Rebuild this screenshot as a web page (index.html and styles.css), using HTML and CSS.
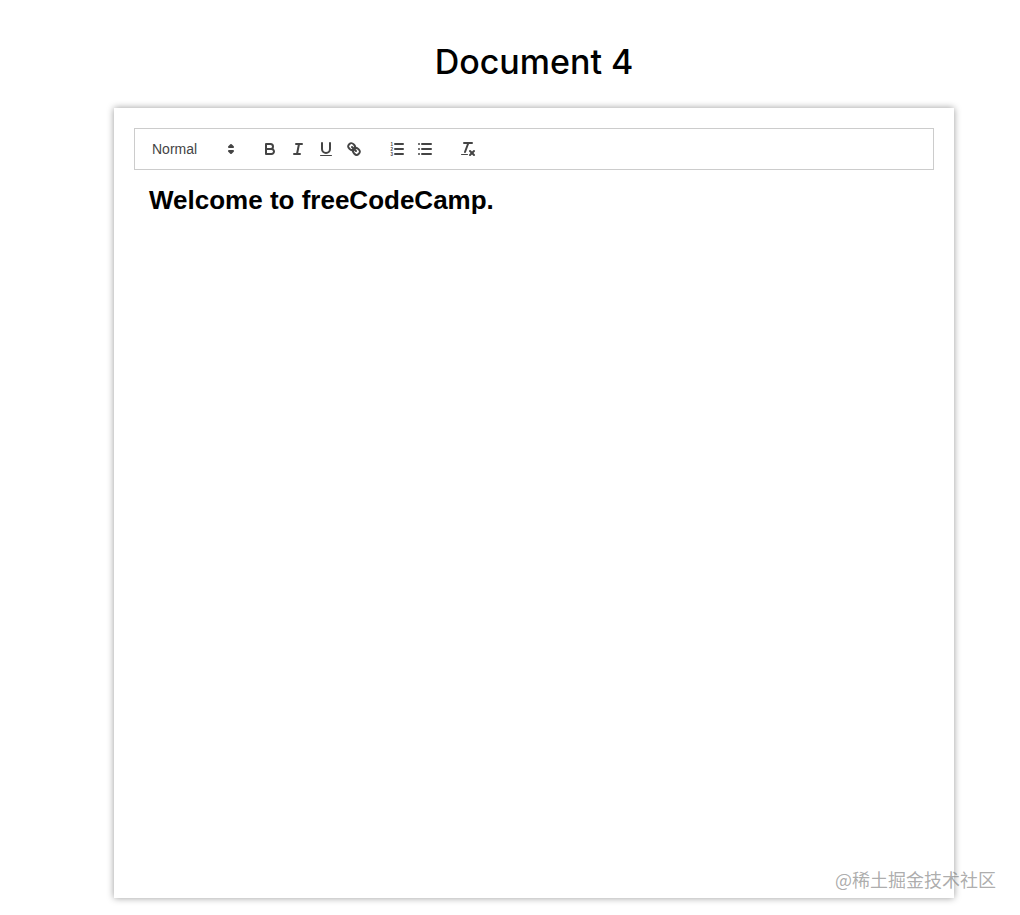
FILE: index.html
```html
<!DOCTYPE html>
<html lang="en">
<head>
  <meta charset="UTF-8">
  <title>Document 4</title>
  <link rel="stylesheet" href="styles.css">
</head>
<body>
  <div class="page">
    <h1 class="doc-title">Document 4</h1>

    <div class="paper">
      <div class="toolbar">
        <span class="formats">
          <span class="picker">
            <span class="picker-label">Normal</span>
            <svg viewBox="0 0 18 18">
              <polygon class="stroke" points="7 11 9 13 11 11 7 11"/>
              <polygon class="stroke" points="7 7 9 5 11 7 7 7"/>
            </svg>
          </span>
        </span>

        <span class="formats">
          <button class="tool" type="button" aria-label="Bold">
            <svg viewBox="0 0 18 18">
              <path class="stroke" d="M5,4H9.5A2.5,2.5,0,0,1,12,6.5v0A2.5,2.5,0,0,1,9.5,9H5A0,0,0,0,1,5,9V4A0,0,0,0,1,5,4Z"/>
              <path class="stroke" d="M5,9h5.5A2.5,2.5,0,0,1,13,11.5v0A2.5,2.5,0,0,1,10.5,14H5a0,0,0,0,1,0,0V9A0,0,0,0,1,5,9Z"/>
            </svg>
          </button>
          <button class="tool" type="button" aria-label="Italic">
            <svg viewBox="0 0 18 18">
              <line class="stroke" x1="7" x2="13" y1="4" y2="4"/>
              <line class="stroke" x1="5" x2="11" y1="14" y2="14"/>
              <line class="stroke" x1="8" x2="10" y1="14" y2="4"/>
            </svg>
          </button>
          <button class="tool" type="button" aria-label="Underline">
            <svg viewBox="0 0 18 18">
              <path class="stroke" d="M5,3V9a4.012,4.012,0,0,0,4,4H9a4.012,4.012,0,0,0,4-4V3"/>
              <rect class="fill" height="1" rx="0.5" ry="0.5" width="12" x="3" y="15"/>
            </svg>
          </button>
          <button class="tool" type="button" aria-label="Link">
            <svg viewBox="0 0 18 18">
              <line class="stroke" x1="7" x2="11" y1="7" y2="11"/>
              <path class="stroke" d="M8.9,4.577a3.476,3.476,0,0,1,.36,4.679A3.476,3.476,0,0,1,4.577,8.9C3.185,7.5,2.035,6.4,4.217,4.217S7.5,3.185,8.9,4.577Z"/>
              <path class="stroke" d="M13.423,9.1a3.476,3.476,0,0,0-4.679-.36,3.476,3.476,0,0,0,.36,4.679c1.392,1.392,2.5,2.542,4.679.36S14.815,10.5,13.423,9.1Z"/>
            </svg>
          </button>
        </span>

        <span class="formats">
          <button class="tool" type="button" aria-label="Ordered list">
            <svg viewBox="0 0 18 18">
              <line class="stroke" x1="7" x2="15" y1="4" y2="4"/>
              <line class="stroke" x1="7" x2="15" y1="9" y2="9"/>
              <line class="stroke" x1="7" x2="15" y1="14" y2="14"/>
              <text class="list-num" x="2.4" y="5.6">1</text>
              <text class="list-num" x="2.4" y="10.6">2</text>
              <text class="list-num" x="2.4" y="15.6">3</text>
            </svg>
          </button>
          <button class="tool" type="button" aria-label="Bullet list">
            <svg viewBox="0 0 18 18">
              <line class="stroke" x1="6" x2="15" y1="4" y2="4"/>
              <line class="stroke" x1="6" x2="15" y1="9" y2="9"/>
              <line class="stroke" x1="6" x2="15" y1="14" y2="14"/>
              <line class="stroke" x1="3" x2="3" y1="4" y2="4"/>
              <line class="stroke" x1="3" x2="3" y1="9" y2="9"/>
              <line class="stroke" x1="3" x2="3" y1="14" y2="14"/>
            </svg>
          </button>
        </span>

        <span class="formats">
          <button class="tool" type="button" aria-label="Clear formatting">
            <svg viewBox="0 0 18 18">
              <line class="stroke" x1="5" x2="13" y1="3" y2="3"/>
              <line class="stroke" x1="6" x2="9.35" y1="12" y2="3"/>
              <line class="stroke" x1="11" x2="15" y1="11" y2="15"/>
              <line class="stroke" x1="15" x2="11" y1="11" y2="15"/>
              <rect class="fill" height="1" rx="0.5" ry="0.5" width="7" x="2" y="14"/>
            </svg>
          </button>
        </span>
      </div>

      <div class="editor">
        <h1>Welcome to freeCodeCamp.</h1>
      </div>
    </div>
  </div>

  <div class="watermark">@稀土掘金技术社区</div>
</body>
</html>
```

FILE: styles.css
```css
html, body {
  height: 100%;
}

body {
  margin: 0;
  background-color: #fff;
  color: #000;
  font-family: "Liberation Sans", Arial, sans-serif;
  overflow: hidden;
}

.page {
  width: 840px;
  margin-left: 114px;
  padding-top: 42px;
}

.doc-title {
  margin: 0 0 26px;
  font-family: Inter, "Noto Sans", sans-serif;
  font-size: 34px;
  font-weight: 500;
  line-height: 40px;
  text-align: center;
  color: #000;
}

.paper {
  height: 790px;
  padding: 20px;
  box-sizing: border-box;
  background-color: #fff;
  box-shadow: 0 0 7px rgba(0, 0, 0, 0.4);
}

.toolbar {
  display: flex;
  padding: 8px;
  border: 1px solid #ccc;
}

.formats {
  display: flex;
  margin-right: 15px;
}

.picker {
  display: flex;
  align-items: center;
  justify-content: space-between;
  width: 98px;
  height: 24px;
  padding-left: 9px;
  padding-right: 1px;
  box-sizing: border-box;
  font-size: 14px;
  color: #444;
}

.picker svg {
  width: 18px;
  height: 18px;
}

.tool {
  width: 28px;
  height: 24px;
  padding: 3px 5px;
  border: none;
  background: none;
}

.tool svg {
  display: block;
  width: 18px;
  height: 18px;
}

.stroke {
  fill: none;
  stroke: #444;
  stroke-width: 2;
  stroke-linecap: round;
  stroke-linejoin: round;
}

.fill {
  fill: #444;
}

.list-num {
  font-family: "Liberation Sans", sans-serif;
  font-size: 4.5px;
  font-weight: bold;
  fill: #444;
}

.editor {
  padding: 12px 15px;
}

.editor h1 {
  margin: 0;
  font-size: 26px;
  font-weight: bold;
  line-height: 36px;
  color: #000;
}

.watermark {
  position: absolute;
  right: 24px;
  bottom: 23px;
  font-family: "Noto Sans CJK SC", sans-serif;
  font-size: 18px;
  line-height: 26px;
  color: rgba(120, 120, 120, 0.62);
}
```
